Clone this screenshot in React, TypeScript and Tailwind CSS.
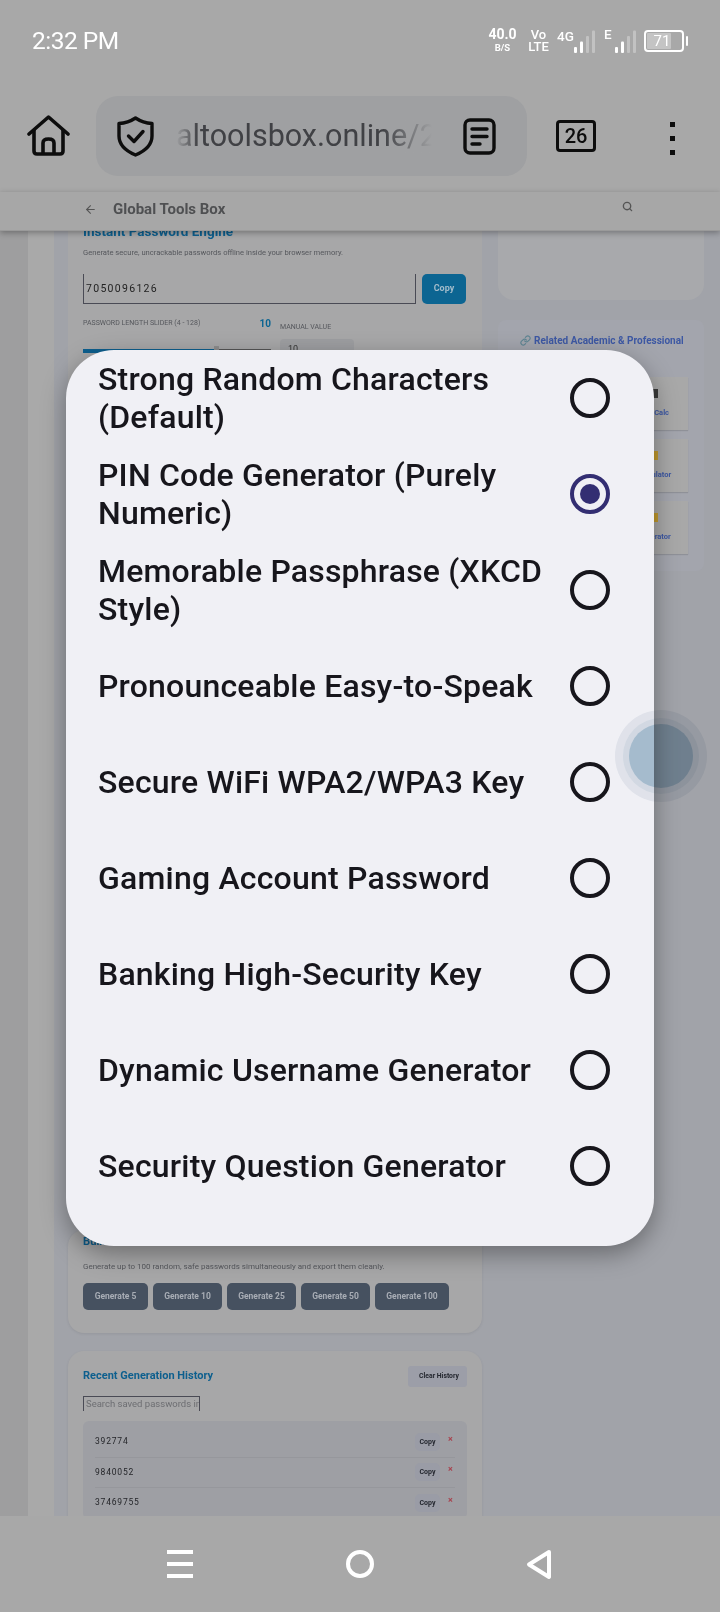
import { Search, ArrowLeft, Link } from 'lucide-react'

const OPTIONS = [
  'Strong Random Characters (Default)',
  'PIN Code Generator (Purely Numeric)',
  'Memorable Passphrase (XKCD Style)',
  'Pronounceable Easy-to-Speak',
  'Secure WiFi WPA2/WPA3 Key',
  'Gaming Account Password',
  'Banking High-Security Key',
  'Dynamic Username Generator',
  'Security Question Generator',
]
const BULK = [
  { label: 'Generate 5', w: 'w-[65px]' },
  { label: 'Generate 10', w: 'w-[69px]' },
  { label: 'Generate 25', w: 'w-[69px]' },
  { label: 'Generate 50', w: 'w-[69px]' },
  { label: 'Generate 100', w: 'w-[74px]' },
]
const HISTORY = ['392774', '9840052', '37469755']
const TILES = [
  { label: 'Age Calc', icon: 'bg-[#3a3a3a]' },
  { label: 'Calculator', icon: 'bg-[#c19a2e]' },
  { label: 'Generator', icon: 'bg-[#c19a2e]' },
]

function Radio({ selected }: { selected: boolean }) {
  return (
    <span className={`flex h-10 w-10 shrink-0 items-center justify-center rounded-full border-4 ${selected ? 'border-[#332e72]' : 'border-[#17161c]'}`}>
      {selected && <span className="h-5 w-5 rounded-full bg-[#332e72]" />}
    </span>
  )
}

function Bars({ lit }: { lit: number }) {
  return (
    <svg className="shrink-0" width="22" height="23" viewBox="0 0 22 23">
      {[0, 1, 2, 3].map(i => (
        <rect key={i} x={i * 6} y={17 - i * 5.5} width="3" height={6 + i * 5.5} rx="1" fill="white" opacity={i < lit ? 1 : 0.3} />
      ))}
    </svg>
  )
}

function StatusBar() {
  return (
    <div className="flex h-[82px] items-center justify-between pl-8 pr-8 text-white">
      <span className="mt-[1px] text-[24.5px] tracking-[-0.5px]">2:32 PM</span>
      <div className="flex items-center">
        <div className="-mt-[1px] flex w-[29px] flex-col items-center font-bold leading-[14px]">
          <span className="text-[14px]">40.0</span>
          <span className="text-[9.5px]">B/S</span>
        </div>
        <div className="ml-[11px] flex w-[21px] flex-col items-center text-[13px] font-medium leading-[12px]">
          <span>Vo</span>
          <span>LTE</span>
        </div>
        <span className="mb-2 ml-[8px] w-[17px] text-[13.5px] font-medium leading-none">4G</span>
        <Bars lit={2} />
        <span className="mb-3 ml-2 w-[11px] text-[13.5px] font-medium leading-none">E</span>
        <Bars lit={2} />
        <div className="ml-[7px] flex items-center">
          <div className="flex h-[22px] w-[40px] items-center rounded-[4px] border-2 border-white p-[1px]">
            <div className="flex h-full w-[70%] items-center justify-center rounded-[1px] bg-[#c4c4c4] pl-[6px] text-[15px] leading-none">71</div>
          </div>
          <div className="ml-[2px] h-[10px] w-[2px] rounded-sm bg-white" />
        </div>
      </div>
    </div>
  )
}

function BrowserBar() {
  return (
    <div className="flex h-[110px] items-start pt-[14px]">
      <svg className="ml-[27px] mt-[19px] shrink-0" width="43" height="41" viewBox="0 0 43 41" fill="none" stroke="#0d0d0d" strokeWidth="3.6" strokeLinejoin="round">
        <path d="M2 19 L21.5 2 L41 19" strokeLinecap="round" />
        <path d="M7 15 V36 Q7 39 10 39 H33 Q36 39 36 36 V15" />
        <path d="M16 39 V28 Q16 24 21.5 24 Q27 24 27 28 V39" />
      </svg>
      <div className="ml-[26px] flex h-[80px] w-[431px] items-center rounded-[22px] bg-[#9fa0a2] pl-[21px]">
        <svg className="shrink-0" width="37" height="41" viewBox="0 0 37 41" fill="none" stroke="#0d0d0d" strokeWidth="3.4" strokeLinejoin="round" strokeLinecap="round">
          <path d="M18.5 2 Q26 7 35 7.5 V20 Q35 32 18.5 39 Q2 32 2 20 V7.5 Q11 7 18.5 2 Z" />
          <path d="M11.5 20 L17 25.5 L26 15.5" />
        </svg>
        <div className="relative ml-[22px] w-[256px] overflow-hidden whitespace-nowrap text-[30.5px] leading-[40px] text-[#404145]">
          altoolsbox.online/2
          <div className="absolute inset-y-0 left-0 w-[22px] bg-gradient-to-r from-[#9fa0a2] to-transparent" />
          <div className="absolute inset-y-0 right-0 w-[50px] bg-gradient-to-l from-[#9fa0a2] to-transparent" />
        </div>
        <svg className="ml-[31px] shrink-0" width="33" height="37" viewBox="0 0 33 37" fill="none" stroke="#0d0d0d" strokeWidth="3.4" strokeLinecap="round">
          <rect x="2" y="2" width="29" height="33" rx="5" />
          <path d="M9 11 H24 M9 18.5 H24 M9 26 H17" />
        </svg>
      </div>
      <div className="ml-[29px] mt-[24px] flex h-8 w-10 items-center justify-center rounded-[4px] border-[3px] border-[#0d0d0d] text-[20px] font-medium leading-none text-[#0d0d0d]">26</div>
      <div className="ml-[74px] mt-[26px] flex flex-col gap-[9px]">
        <span className="h-[5px] w-[5px] bg-[#0d0d0d]" />
        <span className="h-[5px] w-[5px] bg-[#0d0d0d]" />
        <span className="h-[5px] w-[5px] bg-[#0d0d0d]" />
      </div>
    </div>
  )
}

function SiteHeader() {
  return (
    <div className="relative z-10 flex h-[39px] shrink-0 items-center justify-between border-b border-[#9a9a9a] bg-[#a7a7a7] pb-[3px] pl-[84px] pr-[87px] shadow-[0_2px_6px_rgba(0,0,0,0.3)]">
      <div className="flex items-center gap-[16px]">
        <ArrowLeft size={13} color="#555" strokeWidth={2} />
        <span className="text-[15px] font-bold text-[#4f5052]">Global Tools Box</span>
      </div>
      <Search size={11} color="#555" strokeWidth={3} className="-mt-[7px]" />
    </div>
  )
}

function EngineCard() {
  return (
    <div className="h-[981px] shrink-0 rounded-b-2xl bg-[#a7a7a8] px-[15px]">
      <h2 className="-mt-[9px] text-[13.5px] font-bold leading-[18px] text-[#0d5f8e]">Instant Password Engine</h2>
      <p className="mt-2 text-[7.6px] leading-[10px] text-[#55575c]">Generate secure, uncrackable passwords offline inside your browser memory.</p>
      <div className="mt-4 flex gap-[6px]">
        <div className="flex h-[30px] w-[333px] items-center border-b border-l border-r border-[#4a4b55] pl-[2px] text-[10.5px] tracking-[1.3px] text-[#222]">7050096126</div>
        <button type="button" className="h-[30px] w-[44px] rounded-[5px] bg-[#0c6592] text-[9px] font-bold text-[#a3bccb]">Copy</button>
      </div>
      <div className="mt-3 flex">
        <div className="w-[188px]">
          <div className="flex items-center justify-between">
            <span className="text-[7px] text-[#55575c]">PASSWORD LENGTH SLIDER (4 - 128)</span>
            <span className="text-[10px] font-bold text-[#0c6592]">10</span>
          </div>
          <div className="mt-[15px] flex items-center">
            <div className="h-[4px] w-[131px] bg-[#0d5f8e]" />
            <div className="h-[10px] w-[5px] bg-[#8d8d8d]" />
            <div className="h-[4px] w-[52px] border border-[#555]" />
          </div>
        </div>
        <div className="ml-[9px] mt-[6px]">
          <span className="block text-[7px] text-[#55575c]">MANUAL VALUE</span>
          <div className="mt-[6px] h-[30px] w-[74px] rounded bg-[#9d9ea1] pl-2 pt-1 text-[9px] text-[#333]">10</div>
        </div>
      </div>
    </div>
  )
}

function BulkCard() {
  return (
    <div className="shrink-0 rounded-2xl bg-[#a7a7a8] px-[15px] pb-[23px] pt-[5px] shadow-[0_1px_3px_rgba(0,0,0,0.08)]">
      <h2 className="text-[11.2px] font-bold leading-[14px] text-[#0d5f8e]">Bulk Password Generator</h2>
      <p className="mt-[13px] text-[8px] leading-[10px] text-[#55575c]">Generate up to 100 random, safe passwords simultaneously and export them cleanly.</p>
      <div className="mt-[11px] flex gap-[5px]">
        {BULK.map(b => (
          <button key={b.label} type="button" className={`h-[27px] ${b.w} rounded-[5px] bg-[#465160] text-[8.5px] font-bold text-[#a8adb5]`}>{b.label}</button>
        ))}
      </div>
    </div>
  )
}

function HistoryCard() {
  return (
    <div className="shrink-0 rounded-t-2xl bg-[#a7a7a8] px-[15px] pt-[15px] shadow-[0_1px_3px_rgba(0,0,0,0.08)]">
      <div className="flex items-center justify-between">
        <h2 className="text-[11px] font-bold text-[#0d5f8e]">Recent Generation History</h2>
        <button type="button" className="h-[21px] w-[59px] rounded-[3px] bg-[#9c9ea8] pl-[3px] text-[6.8px] font-bold text-[#23262e]">Clear History</button>
      </div>
      <div className="mt-[9px] flex h-[15px] w-[117px] items-center overflow-hidden whitespace-nowrap border-l border-r border-t border-[#4a4b55] pl-[2px] text-[9.5px] text-[#6d6e72]">Search saved passwords in</div>
      <div className="mt-[10px] rounded-md bg-[#9e9fa4] px-[12px] pt-[6px]">
        {HISTORY.map(value => (
          <div key={value} className="flex h-[30.5px] items-center justify-between border-b border-[#96979c]">
            <span className="text-[8.5px] tracking-[0.8px] text-[#25262a]">{value}</span>
            <div className="flex items-center">
              <button type="button" className="h-[18px] w-[25px] rounded-[5px] bg-[#9a9ca6] text-[7px] font-bold text-[#23262e]">Copy</button>
              <span className="-mt-[5px] ml-[6px] w-[9px] text-center text-[9px] font-bold leading-none text-[#a8434f]">×</span>
            </div>
          </div>
        ))}
      </div>
    </div>
  )
}

function Sidebar() {
  return (
    <div className="ml-[16px] flex w-[206px] shrink-0 flex-col gap-[20px]">
      <div className="h-[69px] rounded-b-2xl bg-[#a8a9ac]" />
      <div className="flex h-[251px] flex-col rounded-lg bg-[#a3a5ad] pl-[22px] pr-[16px] pt-[13px]">
        <p className="flex items-center gap-[3px] whitespace-nowrap text-[10px] font-bold text-[#3d58a3]">
          <Link size={11} color="#5f8593" strokeWidth={2.5} />
          Related Academic &amp; Professional
        </p>
        <div className="mt-[29px] grid grid-cols-[1fr_68px] gap-x-[8px] gap-y-[9px]">
          {TILES.map(t => (
            <div key={t.label} className="col-start-2 flex h-[53px] flex-col items-center justify-center gap-[9px] bg-[#a8a8a8] shadow-[0_1px_1px_rgba(0,0,0,0.12)]">
              <span className={`h-[9px] w-[7px] ${t.icon}`} />
              <span className="whitespace-nowrap text-[7.5px] font-bold text-[#3d58a3]">{t.label}</span>
            </div>
          ))}
        </div>
      </div>
    </div>
  )
}

function OptionsDialog() {
  return (
    <div className="absolute left-[66px] top-[350px] z-20 w-[588px] rounded-[48px] bg-[#f0f0f5] pb-8 pl-8 pr-11 shadow-[0_8px_24px_rgba(0,0,0,0.35)]">
      {OPTIONS.map((label, i) => (
        <div key={label} className="flex h-24 items-center justify-between">
          <span className="w-[454px] text-[32px] font-medium leading-[38px] tracking-[0.2px] text-[#17161c]">{label}</span>
          <Radio selected={i === 1} />
        </div>
      ))}
    </div>
  )
}

function NavBar() {
  return (
    <div className="relative z-10 flex h-[96px] shrink-0 items-start bg-[#a8a8a8] pl-[167px] pt-[34px]">
      <div className="flex h-[28px] w-[26px] flex-col justify-between">
        <span className="h-[4px] bg-white" />
        <span className="h-[4px] bg-white" />
        <span className="h-[4px] bg-white" />
      </div>
      <span className="ml-[153px] h-[28px] w-[28px] rounded-full border-4 border-white" />
      <svg className="-mt-[1px] ml-[152px]" width="26" height="31" viewBox="0 0 26 31" fill="none" stroke="white" strokeWidth="4" strokeLinejoin="round">
        <path d="M23 3 L3 15.5 L23 28 Z" />
      </svg>
    </div>
  )
}

export default function App() {
  return (
    <div className="relative flex h-[1612px] w-[720px] flex-col overflow-hidden bg-[#a8a8a8] font-['Roboto',sans-serif]">
      <StatusBar />
      <BrowserBar />
      <SiteHeader />
      <div className="flex min-h-0 flex-1 overflow-hidden bg-[#a1a3a9]">
        <div className="w-7 shrink-0 bg-[#9e9e9f]" />
        <div className="w-[26px] shrink-0 bg-[#a9a9a9]" />
        <div className="ml-[14px] flex w-[414px] shrink-0 flex-col gap-[18px]">
          <EngineCard />
          <BulkCard />
          <HistoryCard />
        </div>
        <Sidebar />
      </div>
      <NavBar />
      <OptionsDialog />
      <div className="absolute left-[615px] top-[710px] z-30 flex h-[92px] w-[92px] items-center justify-center rounded-full bg-[#eef1f4] mix-blend-multiply">
        <div className="flex h-[76px] w-[76px] items-center justify-center rounded-full bg-[#dfe6ec]">
          <div className="h-16 w-16 rounded-full bg-[#afc7d6]" />
        </div>
      </div>
    </div>
  )
}
